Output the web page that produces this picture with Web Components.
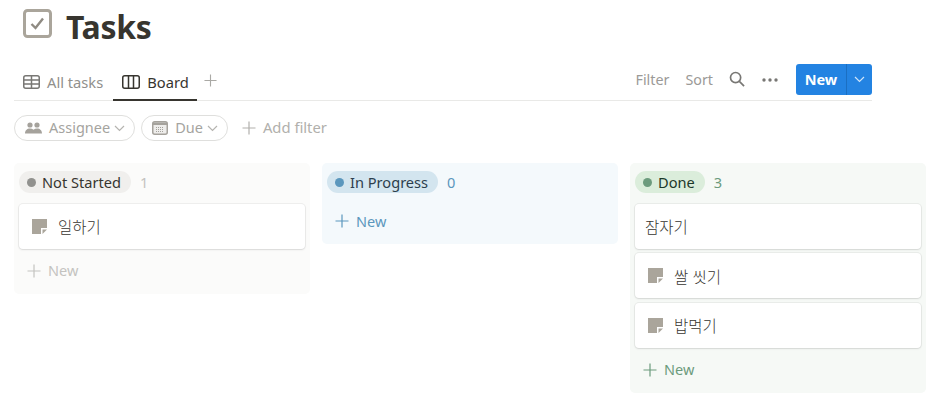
<!DOCTYPE html>
<html lang="ko">
<head>
<meta charset="utf-8">
<title>Tasks</title>
<style>
  html, body { margin: 0; background: #fff; }
  body {
    font-family: "Noto Sans", "Noto Sans CJK KR", sans-serif;
    color: #37352f;
    overflow: hidden;
  }
</style>
</head>
<body>
<page-title>Tasks</page-title>
<view-bar>
  <view-tab icon="table">All tasks</view-tab>
  <view-tab icon="board" active>Board</view-tab>
</view-bar>
<filter-bar>
  <filter-pill icon="people">Assignee</filter-pill>
  <filter-pill icon="calendar">Due</filter-pill>
</filter-bar>
<task-board>
  <board-column name="Not Started" count="1" tone="gray">
    <task-card doc>일하기</task-card>
  </board-column>
  <board-column name="In Progress" count="0" tone="blue"></board-column>
  <board-column name="Done" count="3" tone="green">
    <task-card>잠자기</task-card>
    <task-card doc>쌀 씻기</task-card>
    <task-card doc>밥먹기</task-card>
  </board-column>
</task-board>

<script>
const PLUS = (size, color) => /* html */`
  <svg width="${size}" height="${size}" viewBox="0 0 14 14" fill="none" stroke="${color}" stroke-width="1.2">
    <path d="M7 .5v13M.5 7h13"/>
  </svg>`;

const CHEVRON = (color) => /* html */`
  <svg width="11" height="7" viewBox="0 0 11 7" fill="none" stroke="${color}" stroke-width="1.2">
    <path d="M1 1l4.500 4.500L10 1"/>
  </svg>`;

const ICONS = {
  table: /* html */`
    <svg width="17" height="14" viewBox="0 0 17 14" fill="none" stroke="#787774" stroke-width="1.500">
      <rect x=".75" y=".75" width="15.500" height="12.500" rx="2"/>
      <path d="M1 5h15M1 9h15M8.500 1v12"/>
    </svg>`,
  board: /* html */`
    <svg width="18" height="14" viewBox="0 0 18 14" fill="none" stroke="#37352f" stroke-width="1.500">
      <rect x=".75" y=".75" width="16.500" height="12.500" rx="2"/>
      <path d="M6.500 1v12M11.500 1v12"/>
    </svg>`,
  people: /* html */`
    <svg width="17" height="12" viewBox="0 0 17 12" fill="#a5a29c">
      <circle cx="5" cy="3" r="2.600"/>
      <circle cx="12" cy="3" r="2.600"/>
      <path d="M0 11.500c0-3 2-5 5-5 1.300 0 2.500.4 3.500 1.200C9.500 6.900 10.700 6.500 12 6.500c3 0 5 2 5 5H0z"/>
    </svg>`,
  calendar: /* html */`
    <svg width="16" height="14" viewBox="0 0 16 14" fill="none">
      <rect x=".75" y=".75" width="14.500" height="12.500" rx="2" fill="#eeedeb" stroke="#a5a29c" stroke-width="1.500"/>
      <path d="M1 1.500h14v2.500H1z" fill="#a5a29c"/>
      <path d="M4 6.500h8M4 8.500h8M4 10.500h8" stroke="#a5a29c" stroke-dasharray="1 1"/>
    </svg>`
};

class PageTitle extends HTMLElement {
  constructor() {
    super();
    this.attachShadow({ mode: 'open' }).innerHTML = /* html */`
      <style>
        :host { display: flex; align-items: flex-start; gap: 14px; height: 64px; padding: 9px 0 0 23px; box-sizing: border-box; }
        svg { display: block; }
        h1 { margin: -1px 0 0; font-size: 32px; line-height: 38px; font-weight: 700; color: #37352f; letter-spacing: -.3px; }
      </style>
      <svg width="29" height="29" viewBox="0 0 29 29" fill="none">
        <rect x="1.500" y="1.500" width="26" height="26" rx="3" stroke="#aaa59b" stroke-width="3"/>
        <path d="M8.500 15l4 4 7.500-9.500" stroke="#8f8b83" stroke-width="2.400"/>
      </svg>
      <h1><slot></slot></h1>`;
  }
}

class ViewTab extends HTMLElement {
  constructor() {
    super();
    const active = this.hasAttribute('active');
    this.attachShadow({ mode: 'open' }).innerHTML = /* html */`
      <style>
        :host {
          display: flex; align-items: center; gap: 7px; height: 36px; box-sizing: border-box;
          padding: 0 9px; font-size: 14.700px; color: ${active ? '#37352f' : '#91908c'};
          border-bottom: 2px solid ${active ? '#37352f' : 'transparent'};
        }
        :host([active]) { margin-left: 1px; padding: 0 8px 0 9px; }
        span { margin-top: -1px; }
      </style>
      ${ICONS[this.getAttribute('icon')]}<span><slot></slot></span>`;
  }
}

class ViewBar extends HTMLElement {
  constructor() {
    super();
    this.attachShadow({ mode: 'open' }).innerHTML = /* html */`
      <style>
        :host { display: flex; align-items: flex-end; width: 858px; height: 37px; margin-left: 14px; border-bottom: 1px solid #e9e9e7; box-sizing: border-box; }
        .tabs { display: flex; align-items: flex-end; margin-bottom: -1px; }
        .plus { display: flex; align-self: center; margin: -4px 0 0 7px; }
        .actions { display: flex; align-items: center; margin: 0 0 5px auto; height: 31px; font-size: 14.300px; color: #9b9a97; }
        .filter { margin-right: 16px; }
        .sort { margin-right: 16px; }
        .search { display: block; margin-right: 17px; margin-top: -2px; }
        .dots { display: block; margin-right: 18px; }
        .new { display: flex; height: 31px; border-radius: 3px; background: #2383e2; color: #fff; font-weight: 600; width: 76px; }
        .new b { flex: 1; display: flex; align-items: center; justify-content: center; font-weight: 700; font-size: 14.500px; margin-top: -1px; }
        .new i { width: 26px; display: flex; align-items: center; justify-content: center; border-left: 1px solid #1b6fc2; box-sizing: border-box; }
      </style>
      <div class="tabs"><slot></slot></div>
      <span class="plus">${PLUS(13, '#aaa9a5')}</span>
      <div class="actions">
        <span class="filter">Filter</span>
        <span class="sort">Sort</span>
        <svg class="search" width="16" height="16" viewBox="0 0 17 17" fill="none" stroke="#787774" stroke-width="1.800">
          <circle cx="7" cy="7" r="5.400"/><path d="M11 11l5 5"/>
        </svg>
        <svg class="dots" width="16" height="4" viewBox="0 0 16 4" fill="#787774">
          <circle cx="2" cy="2" r="1.700"/><circle cx="8" cy="2" r="1.700"/><circle cx="14" cy="2" r="1.700"/>
        </svg>
        <div class="new"><b>New</b><i>${CHEVRON('#cfe4f9')}</i></div>
      </div>`;
  }
}

class FilterPill extends HTMLElement {
  constructor() {
    super();
    this.attachShadow({ mode: 'open' }).innerHTML = /* html */`
      <style>
        :host {
          display: flex; align-items: center; height: 26px; padding: 0 9px 0 10px; gap: 7px; box-sizing: border-box;
          border: 1px solid #dfdfdd; border-radius: 13px; font-size: 14.500px; color: #a5a4a0;
        }
        span { margin: -2px 0 0 0; }
        svg:last-child { margin-left: -3px; }
      </style>
      ${ICONS[this.getAttribute('icon')]}<span><slot></slot></span>${CHEVRON('#b5b4b0')}`;
  }
}

class FilterBar extends HTMLElement {
  constructor() {
    super();
    this.attachShadow({ mode: 'open' }).innerHTML = /* html */`
      <style>
        :host { display: flex; align-items: center; gap: 6px; margin: 14px 0 0 14px; height: 26px; }
        .add { display: flex; align-items: center; gap: 7px; margin-left: 8px; font-size: 14.800px; color: #b1b0ac; }
        .add span { margin-top: -2px; }
      </style>
      <slot></slot>
      <span class="add">${PLUS(14, '#b1b0ac')}<span>Add filter</span></span>`;
  }
}

const TONES = {
  gray: { bg: '#fbfbfa', pill: '#f0efed', dot: '#91918e', text: '#37352f', count: '#c4c3c0', add: '#c4c3c0' },
  blue: { bg: '#f4f9fc', pill: '#d3e5ef', dot: '#5b97bd', text: '#2c3e4d', count: '#5b97bd', add: '#5b97bd' },
  green: { bg: '#f6f9f6', pill: '#dbeddb', dot: '#6c9b7d', text: '#1c3829', count: '#6c9b7d', add: '#6c9b7d' }
};

class BoardColumn extends HTMLElement {
  constructor() {
    super();
    const tone = TONES[this.getAttribute('tone')];
    this.attachShadow({ mode: 'open' }).innerHTML = /* html */`
      <style>
        :host { display: block; width: 296px; padding: 8px 5px 1px; box-sizing: border-box; background: ${tone.bg}; border-radius: 5px; }
        header { display: flex; align-items: center; height: 22px; font-size: 14.600px; margin-bottom: 6px; }
        .pill { display: flex; align-items: center; gap: 6px; height: 22px; padding: 0 10px 0 8px; border-radius: 11px; background: ${tone.pill}; color: ${tone.text}; }
        .dot { width: 9px; height: 9px; border-radius: 50%; background: ${tone.dot}; }
        .count { margin-left: 9px; color: ${tone.count}; }
        .cards { display: flex; flex-direction: column; gap: 4.500px; margin-top: 10.500px; }
        :host([count="0"]) .cards { display: none; }
        .add { display: flex; align-items: center; gap: 7px; height: 44px; padding-left: 8px; font-size: 14.500px; color: ${tone.add}; }
        .add span { margin-top: -1px; }
      </style>
      <header>
        <span class="pill"><span class="dot"></span>${this.getAttribute('name')}</span>
        <span class="count">${this.getAttribute('count')}</span>
      </header>
      <div class="cards"><slot></slot></div>
      <div class="add">${PLUS(14, tone.add)}<span>New</span></div>`;
  }
}

class TaskCard extends HTMLElement {
  constructor() {
    super();
    const doc = this.hasAttribute('doc') ? /* html */`
      <svg width="15" height="15" viewBox="0 0 15 15" fill="#aaa59b">
        <path d="M0 0h15v9H9v6H0z"/>
        <path d="M10.500 10.500H15L10.500 15z"/>
      </svg>` : '';
    this.attachShadow({ mode: 'open' }).innerHTML = /* html */`
      <style>
        :host {
          display: flex; align-items: center; gap: 11px; height: 45px; padding: 0 13px; box-sizing: border-box;
          background: #fff; border-radius: 4px; font-family: "Noto Sans CJK KR", sans-serif; font-size: 15.500px; font-weight: 300; color: #37352f;
          box-shadow: 0 0 0 1px rgba(15,15,15,.05), 0 1px 2px rgba(15,15,15,.1);
        }
        :host(:not([doc])) { padding-left: 10px; }
        svg { display: block; }
      </style>
      ${doc}<span><slot></slot></span>`;
  }
}

class TaskBoard extends HTMLElement {
  constructor() {
    super();
    this.attachShadow({ mode: 'open' }).innerHTML = /* html */`
      <style>
        :host { display: flex; align-items: flex-start; gap: 12px; margin: 22px 0 0 14px; }
      </style>
      <slot></slot>`;
  }
}

customElements.define('page-title', PageTitle);
customElements.define('view-tab', ViewTab);
customElements.define('view-bar', ViewBar);
customElements.define('filter-pill', FilterPill);
customElements.define('filter-bar', FilterBar);
customElements.define('board-column', BoardColumn);
customElements.define('task-card', TaskCard);
customElements.define('task-board', TaskBoard);
</script>
</body>
</html>
